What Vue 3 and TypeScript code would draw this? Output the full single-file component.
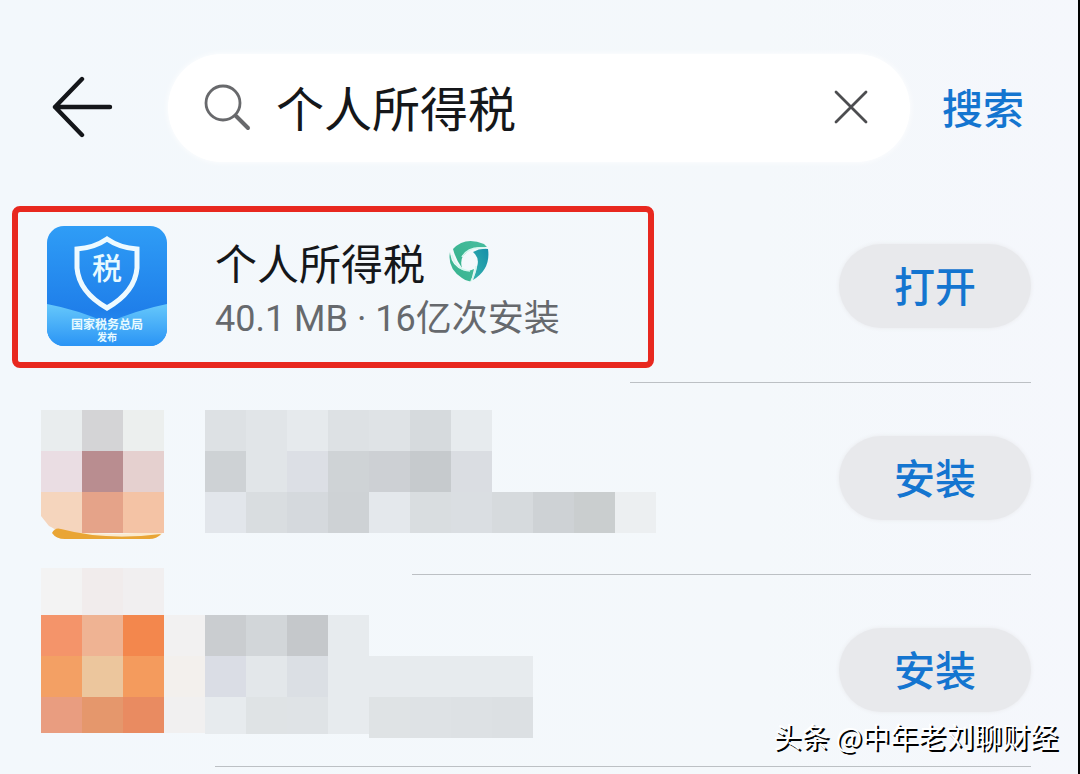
<script setup lang="ts">
import { ref } from 'vue'

interface Block {
  x: number
  y: number
  w: number
  h: number
  fill: string
}

interface MaskedApp {
  id: string
  blocks: Block[]
  ribbon: boolean
}

const CELL = 41
const TEXT_X = 164

const query = ref('个人所得税')

function strip(x: number, y: number, h: number, fills: string[]): Block[] {
  return fills.map((fill, i) => ({ x: x + i * CELL, y, w: CELL, h, fill }))
}

const maskedApps: MaskedApp[] = [
  {
    id: 'second',
    ribbon: true,
    blocks: [
      ...strip(0, 0, 41, ['#e9edee', '#d4d4d6', '#ecefee']),
      ...strip(0, 41, 41, ['#eadde3', '#b98d90', '#e5d0cf']),
      ...strip(CELL, 82, 41, ['#e5a389', '#f4c3a5']),
      ...strip(TEXT_X, 0, 41, ['#dde1e4', '#e1e5e8', '#e6eaed', '#dde1e4', '#dfe3e6', '#d6dadd', '#e7ebee']),
      ...strip(TEXT_X, 41, 41, ['#ced2d5', '#e1e5e8', '#dcdfe5', '#cfd3d6', '#cdd0d4', '#c6cacd', '#dadde2']),
      ...strip(TEXT_X, 82, 41, ['#e2e6eb', '#d9dde0', '#d5d9dd', '#ced2d5', '#e4e8ec', '#d9dde0', '#dadee2', '#d6dadd', '#ced2d5', '#cacecf', '#eceff1']),
    ],
  },
  {
    id: 'third',
    ribbon: false,
    blocks: [
      ...strip(0, -34, 47, ['#f3f3f3', '#f1ecec', '#f1eff0']),
      ...strip(0, 13, 41, ['#f4946a', '#efb393', '#f3874d', '#f2f1f1']),
      ...strip(0, 54, 41, ['#f3a064', '#ecc69d', '#f49b5d', '#f3f0ed']),
      ...strip(0, 95, 36, ['#e99d80', '#e5976c', '#e98b61', '#f1f0f0']),
      ...strip(TEXT_X, 13, 41, ['#cacdd0', '#d2d6d9', '#c5c8cb', '#e7ebee']),
      ...strip(TEXT_X, 54, 41, ['#dadde5', '#e3e7ea', '#dbdfe4', '#e7ebee', '#e7ebee', '#e7ebee', '#e7ebee', '#e7ebee']),
      ...strip(TEXT_X, 95, 37, ['#e7ebee', '#dfe3e5', '#dfe3e6', '#e7ebee']),
      ...strip(TEXT_X + CELL * 4, 95, 41, ['#dfe3e5', '#dee2e5', '#dde1e4', '#dce0e3']),
    ],
  },
]
</script>

<template>
  <main class="page">
    <form class="search" role="search" @submit.prevent>
      <button class="icon-button" type="button" aria-label="返回">
        <svg width="64" height="64" viewBox="0 0 64 64" fill="none" stroke="#14161a" stroke-width="4.4" stroke-linecap="round" stroke-linejoin="round">
          <path d="M32 3 5 31 32 59M5 31H60" />
        </svg>
      </button>
      <label class="field">
        <svg class="lens" width="48" height="48" viewBox="0 0 48 48" fill="none" stroke="#68696c" stroke-linecap="round">
          <circle cx="19" cy="19" r="17" stroke-width="2.8" />
          <path d="M32 32 44 44" stroke-width="4" />
        </svg>
        <input v-model="query" class="query" type="text" aria-label="搜索应用" />
        <button class="icon-button" type="button" aria-label="清除" @click="query = ''">
          <svg width="36" height="36" viewBox="0 0 36 36" fill="none" stroke="#4c4d50" stroke-width="2.8" stroke-linecap="round">
            <path d="M4 2 34 32M34 2 4 32" />
          </svg>
        </button>
      </label>
      <button class="submit" type="submit">搜索</button>
    </form>

    <ul class="apps">
      <li class="app">
        <div class="row">
          <svg class="logo" width="120" height="120" viewBox="0 0 120 120" role="img" aria-label="国家税务总局发布">
            <defs>
              <linearGradient id="sky" x1="0" y1="0" x2="0" y2="1">
                <stop offset="0" stop-color="#2f9df6" />
                <stop offset="0.7" stop-color="#1f7fea" />
                <stop offset="1" stop-color="#2d95f5" />
              </linearGradient>
              <linearGradient id="wave" x1="0" y1="0" x2="0" y2="1">
                <stop offset="0" stop-color="#66c8fb" />
                <stop offset="1" stop-color="#2a94f5" />
              </linearGradient>
              <clipPath id="tile"><rect width="120" height="120" rx="17" /></clipPath>
            </defs>
            <g clip-path="url(#tile)">
              <rect width="120" height="120" fill="url(#sky)" />
              <path d="M0 78Q32 84 60 97Q90 84 120 78V120H0Z" fill="url(#wave)" />
              <path d="M60 13Q73 22 90 23V42Q88 66 60 82Q32 66 30 42V23Q47 22 60 13Z" fill="none" stroke="#eefaff" stroke-width="5" />
              <text class="logo-mark" x="60" y="53" text-anchor="middle">税</text>
              <text class="logo-name" x="60" y="103" text-anchor="middle">国家税务总局</text>
              <text class="logo-note" x="60" y="115" text-anchor="middle">发布</text>
            </g>
          </svg>
          <div class="info">
            <h1 class="name">
              <span>个人所得税</span>
              <svg class="badge" width="44" height="50" viewBox="0 -3 44 50" aria-hidden="true">
                <defs>
                  <linearGradient id="mint" x1="0" y1="1" x2="1" y2="0">
                    <stop offset="0" stop-color="#35b28c" />
                    <stop offset="1" stop-color="#48bd9f" />
                  </linearGradient>
                  <linearGradient id="teal" x1="0" y1="1" x2="1" y2="0">
                    <stop offset="0" stop-color="#35b2ad" />
                    <stop offset="1" stop-color="#168fa9" />
                  </linearGradient>
                </defs>
                <path d="M6 10Q18-3 37 5L40 8Q23 7 16 17Q13 22 15 29Q9 21 6 10Z" fill="url(#mint)" />
                <path d="M3 13Q4 27 16 31Q22 33 27 30L24 42Q20 43 15 39Q0 29 3 13Z" fill="url(#mint)" />
                <path d="M41 10Q44 30 26 41L30 28Q33 19 26 13Q33 9 41 10Z" fill="url(#teal)" />
                <path d="M15 18Q21 7 38 9M5 16Q9 31 23 32M29 27Q29 34 24 42" fill="none" stroke="#d6f7ef" stroke-width="1.5" />
              </svg>
            </h1>
            <p class="meta">40.1 MB · 16亿次安装</p>
          </div>
          <button class="action" type="button">打开</button>
          <div class="highlight" aria-hidden="true"></div>
        </div>
        <hr class="rule short" />
      </li>

      <li v-for="app in maskedApps" :key="app.id" class="app">
        <div class="row">
          <svg class="mosaic" width="615" height="136" viewBox="0 0 615 136" shape-rendering="crispEdges" aria-hidden="true">
            <g v-if="app.ribbon" shape-rendering="auto">
              <path d="M6 112 20 120Q65 127 123 121L119 126H20Z" fill="#fbe9cd" />
              <path d="M0 82H41V123H22L8 116 0 106Z" fill="#f5d5bd" />
              <path d="M11 123Q14 117 20 119Q65 131 120 124Q116 129 108 129H24Q15 129 11 123Z" fill="#e9a535" />
            </g>
            <rect v-for="(b, i) in app.blocks" :key="i" :x="b.x" :y="b.y" :width="b.w" :height="b.h" :fill="b.fill" />
          </svg>
          <button class="action" type="button">安装</button>
        </div>
        <hr class="rule" :class="app.ribbon ? 'medium' : 'long'" />
      </li>
    </ul>

    <p class="credit">头条 @中年老刘聊财经</p>
  </main>
</template>

<style>
body {
  margin: 0;
  background: #f4f8fb;
}
</style>

<style scoped>
.page {
  position: relative;
  box-sizing: border-box;
  min-height: 100vh;
  overflow: hidden;
  border-right: 2px solid #000;
  background: linear-gradient(90deg, #f3f8fc 0%, #f4f8fb 70%, #f5f7fc 100%);
  font-family: Roboto, "Noto Sans CJK SC", sans-serif;
  color: #15171a;
}

button,
input {
  margin: 0;
  padding: 0;
  border: 0;
  background: none;
  font-family: "Noto Sans CJK SC", sans-serif;
}

.search {
  display: flex;
  align-items: center;
  padding: 54px 54px 28px 50px;
}

.icon-button {
  display: flex;
  flex: none;
}

.field {
  display: flex;
  flex: 1;
  align-items: center;
  box-sizing: border-box;
  min-width: 0;
  height: 108px;
  margin: 0 32px 0 54px;
  padding: 0 42px 0 36px;
  border-radius: 54px;
  background: #fff;
  box-shadow: 0 0 6px #fff;
}

.lens {
  flex: none;
}

.query {
  flex: 1;
  min-width: 0;
  height: 68px;
  margin-bottom: 4px;
  margin-left: 24px;
  outline: none;
  color: #15171a;
  font-size: 48px;
}

.submit {
  flex: none;
  padding-bottom: 4px;
  color: #1475d0;
  font-size: 41px;
  font-weight: 500;
  line-height: 60px;
}

.apps {
  margin: 0;
  padding: 0 47px;
  list-style: none;
}

.row {
  position: relative;
  display: flex;
  align-items: center;
  height: 192px;
}

.app {
  height: 192px;
}

.logo {
  flex: none;
}

.logo-mark,
.logo-name,
.logo-note {
  fill: #e8faff;
  font-family: "Noto Sans CJK SC", sans-serif;
  font-weight: 500;
}

.logo-mark {
  font-size: 30px;
}

.logo-name {
  font-size: 12px;
  font-weight: 700;
}

.logo-note {
  font-size: 10px;
  font-weight: 700;
}

.info {
  flex: 1;
  min-width: 0;
  padding-top: 6px;
  margin-left: 48px;
  white-space: nowrap;
}

.name {
  display: flex;
  gap: 22px;
  align-items: flex-start;
  margin: 0;
  font-size: 42px;
  font-weight: 400;
  line-height: 60px;
}

.meta {
  margin: 0;
  color: #66696d;
  font-size: 36px;
  line-height: 46px;
}

.action {
  flex: none;
  width: 192px;
  height: 84px;
  padding-bottom: 4px;
  margin-left: auto;
  border-radius: 42px;
  background: #e8e9ec;
  box-shadow: 0 0 4px #e8e9ec;
  color: #1475d0;
  font-size: 41px;
  font-weight: 500;
  line-height: 80px;
}

.highlight {
  position: absolute;
  top: 16px;
  left: -35px;
  box-sizing: border-box;
  width: 642px;
  height: 162px;
  border: 6px solid #e8281f;
  border-radius: 8px;
  pointer-events: none;
}

.mosaic {
  flex: none;
  margin-left: -6px;
  overflow: visible;
}

.rule {
  height: 1px;
  margin: 0;
  border: 0;
  background: #bcc0c4;
}

.short {
  margin-left: 583px;
}

.medium {
  margin-left: 365px;
}

.long {
  margin-left: 168px;
}

.credit {
  position: absolute;
  right: 20px;
  bottom: 18px;
  margin: 0;
  color: #fff;
  font-family: "Noto Sans CJK SC", sans-serif;
  font-size: 28px;
  line-height: 40px;
  text-shadow: 2px 2px 0 #000;
  white-space: nowrap;
}
</style>
